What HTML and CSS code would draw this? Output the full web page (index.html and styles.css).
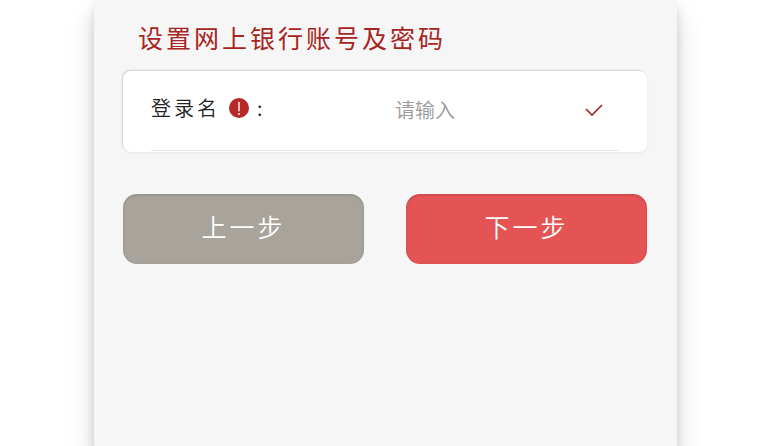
FILE: index.html
```html
<!DOCTYPE html>
<html lang="zh-CN">
<head>
  <meta charset="UTF-8">
  <meta name="viewport" content="width=device-width, initial-scale=1">
  <title>设置网上银行账号及密码</title>
  <link rel="stylesheet" href="styles.css">
</head>
<body>

  <main class="panel">
    <h1>设置网上银行账号及密码</h1>

    <form id="form">
      <div class="card">
        <div class="field">
          <label for="login_name">
            登录名
            <svg class="info" viewBox="0 0 20 20" aria-hidden="true">
              <circle cx="10" cy="10" r="10" fill="#b52a26"/>
              <path d="M10 4.5v8.3" stroke="#fff" stroke-width="1.4" stroke-linecap="round"/>
              <circle cx="10" cy="15.9" r="1" fill="#fff"/>
            </svg>
            <span>:</span>
          </label>
          <input type="text" id="login_name" name="login_name" placeholder="请输入">
          <svg class="check" viewBox="0 0 18 14" aria-hidden="true">
            <path d="M1 6l6 6L17 2" fill="none" stroke="#a32b2b" stroke-width="1.7"/>
          </svg>
        </div>
      </div>

      <div class="actions">
        <button type="button" class="prev">上一步</button>
        <button type="submit" class="next">下一步</button>
      </div>
    </form>
  </main>

</body>
</html>
```

FILE: styles.css
```css
* {
  box-sizing: border-box;
}

body {
  margin: 0;
  background-color: #fff;
  font-family: "Noto Sans CJK SC", sans-serif;
}

.panel {
  max-width: 583px;
  min-height: 100vh;
  margin: 0 auto;
  padding: 19px 30px 20px 29px;
  background-color: #f6f6f6;
  box-shadow: 0 8px 10px rgba(0,0,0,0.14), 0 16px 26px rgba(0,0,0,0.14);
}

h1 {
  margin: 0 0 16px;
  padding-left: 15px;
  color: #a82420;
  font-size: 25px;
  font-weight: 400;
  line-height: 36px;
  letter-spacing: 3px;
}

.card {
  padding: 0 28px 1px;
  background-color: #fff;
  border-radius: 8px;
  box-shadow: -1px -1px 2px rgba(0,0,0,0.14), 0 1px 3px rgba(0,0,0,0.06);
}

.field {
  display: flex;
  align-items: center;
  height: 80px;
  padding-bottom: 2px;
  border-bottom: 1px solid #e6e6e6;
}

label {
  display: flex;
  align-items: center;
  flex: 1;
  color: #222;
  font-size: 20px;
  font-weight: 350;
  line-height: 30px;
  letter-spacing: 3px;
  padding-bottom: 4px;
}

.info {
  width: 20px;
  height: 20px;
  margin: 0 8px 0 9px;
}

input {
  width: 175px;
  padding: 0;
  border: none;
  outline: none;
  background: none;
  color: #333;
  font-family: inherit;
  font-size: 20px;
  font-weight: 350;
  line-height: 30px;
}

input::placeholder {
  color: #999;
}

.check {
  width: 18px;
  height: 14px;
  margin: 0 16px 0 15px;
}

.actions {
  display: flex;
  gap: 42px;
  margin-top: 42px;
}

button {
  flex: 1;
  height: 70px;
  padding: 0 0 6px;
  border: none;
  border-radius: 14px;
  color: #fff;
  font-family: inherit;
  font-size: 25px;
  font-weight: 350;
  letter-spacing: 3px;
  box-shadow: inset 0 1px 3px rgba(0,0,0,0.16);
  cursor: pointer;
}

.prev {
  background-color: #a8a39b;
}

.next {
  background-color: #e45454;
}
```
